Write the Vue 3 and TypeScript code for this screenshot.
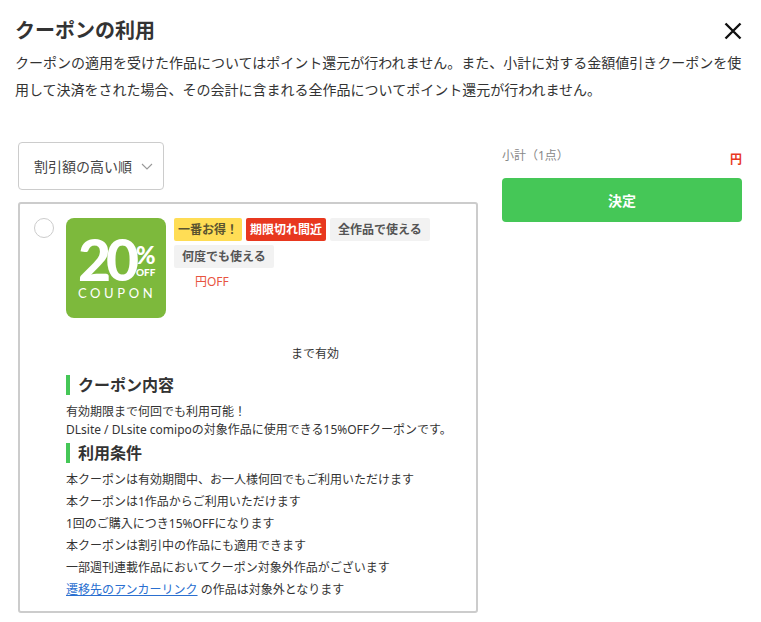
<script setup lang="ts">
const sections: string[] = [
  '本クーポンは有効期間中、お一人様何回でもご利用いただけます',
  '本クーポンは1作品からご利用いただけます',
  '1回のご購入につき15%OFFになります',
  '本クーポンは割引中の作品にも適用できます',
  '一部週刊連載作品においてクーポン対象外作品がございます',
]
</script>

<template>
  <div class="modal">
    <header class="head">
      <h1 class="title">クーポンの利用</h1>
      <svg class="close" width="18" height="18" viewBox="0 0 18 18" aria-label="閉じる">
        <path d="M1.5 1.5 16.5 16.5M16.5 1.5 1.5 16.5" stroke="#111" stroke-width="2.4" fill="none" />
      </svg>
    </header>
    <p class="desc">クーポンの適用を受けた作品についてはポイント還元が行われません。また、小計に対する金額値引きクーポンを使用して決済をされた場合、その会計に含まれる全作品についてポイント還元が行われません。</p>

    <div class="columns">
      <main class="left">
        <div class="select">
          <span>割引額の高い順</span>
          <svg width="12" height="7" viewBox="0 0 12 7"><path d="M1 1 6 6 11 1" stroke="#999" stroke-width="1.1" fill="none" /></svg>
        </div>

        <section class="card">
          <div class="radio"></div>
          <div class="card-body">
            <div class="top">
              <div class="coupon">
                <div class="big">
                  <span class="num">20</span>
                  <span class="pct"><b>%</b><i>OFF</i></span>
                </div>
                <div class="word">COUPON</div>
              </div>
              <div class="info">
                <div class="tags">
                  <span class="tag yellow">一番お得！</span>
                  <span class="tag red">期限切れ間近</span>
                  <span class="tag gray">全作品で使える</span>
                  <span class="tag gray">何度でも使える</span>
                </div>
                <div class="off">円OFF</div>
              </div>
            </div>
            <div class="until">まで有効</div>

            <h2 class="sec">クーポン内容</h2>
            <p class="txt">有効期限まで何回でも利用可能！<br />DLsite / DLsite comipoの対象作品に使用できる15%OFFクーポンです。</p>
            <h2 class="sec sec2">利用条件</h2>
            <ul class="list">
              <li v-for="s in sections" :key="s">{{ s }}</li>
              <li><a class="link" href="#">遷移先のアンカーリンク</a> の作品は対象外となります</li>
            </ul>
          </div>
        </section>
      </main>

      <aside class="right">
        <div class="sub">小計（1点）</div>
        <div class="yen">円</div>
        <button class="ok" type="button">決定</button>
      </aside>
    </div>
  </div>
</template>

<style scoped>
.modal {
  width: 761px;
  height: 622px;
  overflow: hidden;
  box-sizing: border-box;
  padding: 16px 19px 0 15px;
  background: #fff;
  color: #333;
  font-family: "Noto Sans", "Noto Sans CJK JP", sans-serif;
}
.head {
  display: flex;
  justify-content: space-between;
  align-items: center;
  height: 28px;
}
.title {
  margin: 1px 0 0;
  font-size: 20px;
  line-height: 28px;
  font-weight: 700;
}
.close {
  display: block;
  margin-top: 2px;
}
.desc {
  margin: 5px 0 0;
  font-size: 14px;
  line-height: 27px;
  width: 728px;
}
.columns {
  display: flex;
  margin-top: 39px;
  padding-left: 3px;
}
.left {
  width: 460px;
}
.select {
  width: 146px;
  height: 48px;
  box-sizing: border-box;
  border: 1px solid #ccc;
  border-radius: 4px;
  padding: 0 10px 0 15px;
  display: flex;
  align-items: center;
  justify-content: space-between;
  font-size: 14px;
  color: #444;
}
.card {
  margin-top: 12px;
  height: 411px;
  box-sizing: border-box;
  border: 2px solid #ccc;
  border-radius: 3px;
  padding: 14px 14px 0;
  display: flex;
  gap: 12px;
}
.radio {
  width: 20px;
  height: 20px;
  box-sizing: border-box;
  border: 1px solid #ccc;
  border-radius: 50%;
  flex: none;
}
.card-body {
  flex: 1;
  min-width: 0;
}
.top {
  display: flex;
  gap: 8px;
}
.coupon {
  width: 100px;
  height: 100px;
  flex: none;
  border-radius: 8px;
  background: #7db93c;
  color: #fff;
  box-sizing: border-box;
  padding: 18px 0 0 12px;
  font-family: "Lato", sans-serif;
}
.big {
  display: flex;
  align-items: flex-start;
  height: 50px;
}
.num {
  font-size: 57px;
  font-weight: 900;
  line-height: 46px;
  letter-spacing: -5px;
}
.pct {
  display: flex;
  flex-direction: column;
  align-items: center;
  width: 21px;
  margin-left: 1px;
  padding-top: 7px;
}
.pct b {
  font-size: 24px;
  line-height: 24px;
  font-weight: 900;
}
.pct i {
  font-style: normal;
  font-size: 10px;
  line-height: 10px;
  font-weight: 900;
}
.word {
  margin-top: 0;
  font-size: 13px;
  line-height: 14px;
  letter-spacing: 3.6px;
  white-space: nowrap;
}
.info {
  flex: 1;
  min-width: 0;
}
.tags {
  display: flex;
  flex-wrap: wrap;
  gap: 4px;
}
.tag {
  height: 23px;
  line-height: 23px;
  font-size: 12px;
  font-weight: 700;
  border-radius: 2px;
  padding: 0 4px;
}
.yellow {
  background: #ffdd55;
  color: #5a5330;
}
.red {
  background: #e8381f;
  color: #fff;
}
.gray {
  background: #f2f2f2;
  color: #555;
  padding: 0 8px;
}
.off {
  margin: 5px 0 0 21px;
  font-size: 12px;
  line-height: 18px;
  color: #e8543f;
}
.until {
  margin-top: 27px;
  padding-left: 102px;
  text-align: center;
  font-size: 12px;
  line-height: 18px;
}
.sec {
  margin: 12px 0 0;
  border-left: 4px solid #45c757;
  padding-left: 8px;
  height: 20px;
  font-size: 16px;
  line-height: 20px;
  font-weight: 700;
}
.sec2 {
  margin-top: 4px;
}
.txt {
  margin: 8px 0 0;
  font-size: 12px;
  line-height: 18px;
}
.list {
  list-style: none;
  margin: 6px 0 0;
  padding: 0;
  font-size: 12px;
  line-height: 22px;
}
.link {
  color: #2a6fd0;
  text-decoration: underline;
}
.right {
  margin-left: 24px;
  width: 240px;
}
.sub {
  margin-top: 5px;
  font-size: 12px;
  line-height: 18px;
  color: #888;
}
.yen {
  text-align: right;
  margin: -15px 0 8px;
  font-size: 12px;
  line-height: 20px;
  font-weight: 700;
  color: #e8381f;
}
.ok {
  display: block;
  width: 100%;
  height: 44px;
  border: 0;
  border-radius: 4px;
  background: #45c757;
  color: #fff;
  font: 700 14px "Noto Sans", "Noto Sans CJK JP", sans-serif;
}
</style>
